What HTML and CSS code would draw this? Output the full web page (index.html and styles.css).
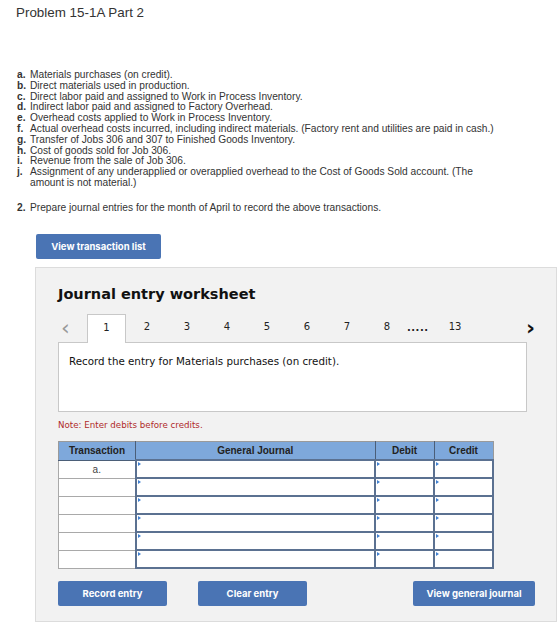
FILE: index.html
```html
<!DOCTYPE html>
<html lang="en">
<head>
    <meta charset="UTF-8">
    <title>Problem 15-1A Part 2</title>
    <link rel="stylesheet" href="styles.css">
</head>
<body>
    <h1 class="title">Problem 15-1A Part 2</h1>

    <ol class="steps">
        <li><b>a.</b><span>Materials purchases (on credit).</span></li>
        <li><b>b.</b><span>Direct materials used in production.</span></li>
        <li><b>c.</b><span>Direct labor paid and assigned to Work in Process Inventory.</span></li>
        <li><b>d.</b><span>Indirect labor paid and assigned to Factory Overhead.</span></li>
        <li><b>e.</b><span>Overhead costs applied to Work in Process Inventory.</span></li>
        <li><b>f.</b><span>Actual overhead costs incurred, including indirect materials. (Factory rent and utilities are paid in cash.)</span></li>
        <li><b>g.</b><span>Transfer of Jobs 306 and 307 to Finished Goods Inventory.</span></li>
        <li><b>h.</b><span>Cost of goods sold for Job 306.</span></li>
        <li><b>i.</b><span>Revenue from the sale of Job 306.</span></li>
        <li><b>j.</b><span>Assignment of any underapplied or overapplied overhead to the Cost of Goods Sold account. (The amount is not material.)</span></li>
    </ol>

    <p class="question"><b>2.</b><span>Prepare journal entries for the month of April to record the above transactions.</span></p>

    <button class="btn btn-list">View transaction list</button>

    <div class="worksheet">
        <h2>Journal entry worksheet</h2>

        <div class="tabs">
            <span class="arrow prev">&lsaquo;</span>
            <span class="tab active">1</span>
            <span class="tab">2</span>
            <span class="tab">3</span>
            <span class="tab">4</span>
            <span class="tab">5</span>
            <span class="tab">6</span>
            <span class="tab">7</span>
            <span class="tab">8</span>
            <span class="dots">.....</span>
            <span class="tab">13</span>
            <span class="arrow next">&rsaquo;</span>
        </div>

        <div class="entry-box">Record the entry for Materials purchases (on credit).</div>

        <p class="note">Note: Enter debits before credits.</p>

        <table class="journal">
            <thead>
                <tr>
                    <th class="col-tr">Transaction</th>
                    <th>General Journal</th>
                    <th class="col-amt">Debit</th>
                    <th class="col-amt">Credit</th>
                </tr>
            </thead>
            <tbody id="rows"></tbody>
        </table>

        <div class="actions">
            <button class="btn">Record entry</button>
            <button class="btn">Clear entry</button>
            <button class="btn btn-journal">View general journal</button>
        </div>
    </div>

    <script>
        const rows = document.getElementById("rows");
        for (let i = 0; i < 6; i++) {
            const row = document.createElement("tr");
            row.innerHTML = `
                <td class="tr-cell">${i === 0 ? "a." : ""}</td>
                <td class="input"></td>
                <td class="input"></td>
                <td class="input"></td>
            `;
            rows.appendChild(row);
        }
    </script>
</body>
</html>
```

FILE: styles.css
```css
* {
    margin: 0;
    padding: 0;
    box-sizing: border-box;
}

body {
    font-family: 'Liberation Sans', Arial, sans-serif;
    color: #333;
    background: #fff;
}

.title {
    font-size: 13.4px;
    font-weight: normal;
    color: #333;
    padding: 4px 0 0 16px;
    line-height: 17px;
}

.steps {
    list-style: none;
    margin: 49px 0 0 17px;
    font-size: 10.2px;
    line-height: 10.8px;
    width: 490px;
}

.steps li,
.question {
    display: flex;
}

.steps b,
.question b {
    width: 13px;
    flex-shrink: 0;
}

.question {
    margin: 13px 0 0 17px;
    font-size: 10.2px;
    line-height: 12px;
}

.btn {
    background: #4a74b4;
    color: #fff;
    border: none;
    border-radius: 2px;
    font-family: 'Inter', 'Liberation Sans', sans-serif;
    font-size: 9.5px;
    font-weight: bold;
    height: 25px;
    cursor: pointer;
}

.btn-list {
    display: block;
    width: 125px;
    margin: 20px 0 0 36px;
}

.worksheet {
    margin: 8px 3px 0 35px;
    height: 355px;
    background: #f2f2f2;
    border: 1px solid #dcdcdc;
    padding: 17px 21px 0 22px;
}

.worksheet h2 {
    font-family: 'DejaVu Sans', Verdana, sans-serif;
    font-size: 14.5px;
    font-weight: bold;
    color: #111;
    line-height: 18px;
}

.tabs {
    display: flex;
    align-items: center;
    height: 28px;
    margin-top: 11px;
    font-family: 'DejaVu Sans', Verdana, sans-serif;
    font-size: 10px;
    color: #222;
}

.tab {
    width: 40px;
    height: 28px;
    line-height: 26px;
    text-align: center;
}

.tab.active {
    width: 39px;
    margin-right: 1px;
    background: #fff;
    border: 1px solid #c8c8c8;
    border-bottom: none;
    height: 29px;
    position: relative;
    top: 1px;
}

.arrow {
    font-size: 22px;
    line-height: 28px;
}

.prev {
    width: 29px;
    padding-left: 3px;
    color: #999;
}

.next {
    margin-left: auto;
    font-weight: bold;
    color: #111;
}

.dots {
    width: 28px;
    font-weight: bold;
    letter-spacing: 0.5px;
    line-height: 24px;
}

.entry-box {
    margin-right: 8px;
    height: 70px;
    background: #fff;
    border: 1px solid #c8c8c8;
    padding: 12px 10px;
    font-family: 'DejaVu Sans', Verdana, sans-serif;
    font-size: 10.3px;
    color: #111;
}

.note {
    margin-top: 7px;
    font-family: 'DejaVu Sans', Verdana, sans-serif;
    font-size: 8.7px;
    color: #b02a2a;
    line-height: 12px;
}

.journal {
    margin-top: 10px;
    width: 436px;
    border-collapse: collapse;
    font-size: 10px;
    table-layout: fixed;
    background: #fff;
}

.journal th {
    background: #7ea8db;
    color: #222;
    font-weight: bold;
    height: 19px;
    border: 1px solid #4b5e78;
    border-top: 1px solid #9a9a9a;
}

.journal th:first-child {
    border-left: 1px solid #9a9a9a;
}

.journal th:last-child {
    border-right: 1px solid #9a9a9a;
}

.col-tr {
    width: 77px;
}

.col-amt {
    width: 59px;
}

.journal td {
    height: 18px;
}

.tr-cell {
    border: 1px solid #a9a9a9;
    text-align: center;
    vertical-align: top;
    padding-top: 3px;
    color: #444;
}

.input {
    border: 2px solid #5b7191;
    position: relative;
}

.input::before {
    content: "";
    position: absolute;
    top: 1px;
    left: 1px;
    border-top: 2px solid transparent;
    border-bottom: 2px solid transparent;
    border-left: 3px solid #3f7fd0;
}

.actions {
    display: flex;
    margin-top: 12px;
}

.actions .btn {
    width: 109px;
}

.actions .btn + .btn {
    margin-left: 31px;
}

.actions .btn-journal {
    width: 122px;
    margin-left: auto !important;
}
```
